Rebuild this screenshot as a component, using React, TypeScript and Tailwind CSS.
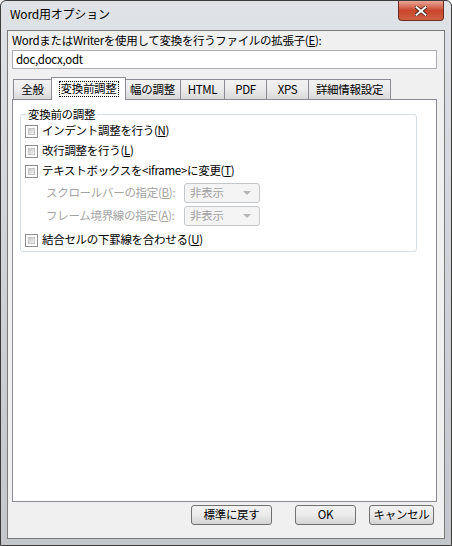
import { ReactNode } from "react"

const font = { fontFamily: '"Noto Sans CJK JP", "Liberation Sans", sans-serif' }

type CheckProps = { label: ReactNode }

function Check(props: CheckProps) {
  return (
    <div className="flex items-center h-[20px]">
      <div className="w-[13px] h-[13px] border border-[#8e8f8f] bg-white p-[2px]">
        <div className="w-full h-full border border-[#c4c4c4] bg-gradient-to-br from-[#cbcbcb] to-[#f4f4f4]" />
      </div>
      <span className="ml-[4px] text-[11.5px] tracking-[-0.3px] text-black leading-none whitespace-nowrap">{props.label}</span>
    </div>
  )
}

function DisabledSelect() {
  return (
    <div className="w-[76px] h-[20px] border border-[#c5c8cb] rounded-[3px] bg-[#f4f4f4] flex items-center justify-between pl-[5px] pr-[8px]">
      <span className="text-[11.5px] text-[#a3a3a3] leading-none">非表示</span>
      <div className="w-0 h-0 border-l-[4px] border-r-[4px] border-t-[4px] border-l-transparent border-r-transparent border-t-[#b5b5b5]" />
    </div>
  )
}

function WinButton(props: { label: string, width: string }) {
  return (
    <button className={"h-[20px] border border-[#707070] rounded-[3px] bg-gradient-to-b from-[#f2f2f2] via-[#ebebeb] to-[#d3d3d3] text-[11.5px] text-black leading-none " + props.width}>
      {props.label}
    </button>
  )
}

const tabs = ["全般", "変換前調整", "幅の調整", "HTML", "PDF", "XPS", "詳細情報設定"]
const tabWidths = ["w-[39px]", "w-[75px]", "w-[57px]", "w-[45px]", "w-[43px]", "w-[43px]", "w-[83px]"]

export default function App() {
  return (
    <div style={font} className="w-[452px] h-[546px] bg-white">
      <div className="w-[452px] h-[546px] flex flex-col border border-[#3c3c3c] rounded-t-[6px] bg-gradient-to-b from-[#dfe2e6] via-[#cfd2d6] to-[#c3c6ca] px-[6px] pb-[6px]">
        {/* title bar */}
        <div className="h-[29px] flex justify-between items-start shrink-0">
          <span className="pl-[3px] pt-[7px] text-[12px] tracking-[-0.2px] text-black leading-none">Word用オプション</span>
          <div className="mr-[1px] w-[46px] h-[20px] rounded-b-[4px] border border-t-0 border-[#6d2c22] bg-gradient-to-b from-[#e8a596] via-[#c9452c] to-[#d0603f] flex items-center justify-center">
            <svg width="12" height="10" viewBox="0 0 12 10">
              <path d="M1 1 L11 9 M11 1 L1 9" stroke="#3a1a14" strokeWidth="3.4" strokeLinecap="square" />
              <path d="M1.5 1.2 L10.5 8.8 M10.5 1.2 L1.5 8.8" stroke="#ffffff" strokeWidth="2" strokeLinecap="square" />
            </svg>
          </div>
        </div>
        {/* client area */}
        <div className="flex-1 flex flex-col bg-[#f0f0f0] border border-[#7a7a7a] px-[4px] pt-[4px] text-[11.5px] tracking-[-0.3px]">
          <div className="leading-none h-[15px] whitespace-nowrap">WordまたはWriterを使用して変換を行うファイルの拡張子(<u>E</u>):</div>
          <div className="h-[19px] border border-[#abadb3] bg-white flex items-center pl-[3px] leading-none mr-[3px]">doc,docx,odt</div>
          {/* tabs */}
          <div className="flex items-end h-[30px] pl-[1px]">
            {tabs.map((t, i) =>
              i === 1 ?
                <div key={t} className={"relative z-10 -mb-[1px] h-[23px] bg-white border border-b-0 border-[#898c95] flex items-center justify-center -mx-[1px] " + tabWidths[i]}>
                  <span className="border border-dotted border-black px-[1px] leading-none py-[1px]">{t}</span>
                </div>
                :
                <div key={t} className={"h-[20px] border border-b-0 border-[#898c95] -ml-[1px] first:ml-0 bg-gradient-to-b from-[#f2f2f2] via-[#ebebeb] to-[#d9d9d9] flex items-center justify-center leading-none " + tabWidths[i]}>
                  {t}
                </div>
            )}
          </div>
          {/* tab panel */}
          <div className="h-[403px] border border-[#898c95] bg-white mr-[3px] px-[7px] pt-[14px]">
            <div className="relative w-[397px] border border-[#d5dfe5] rounded-[3px] pt-[6px] pl-[4px] pb-[1px]">
              <span className="absolute -top-[6px] left-[5px] bg-white px-[2px] leading-none">変換前の調整</span>
              <Check label={<>インデント調整を行う(<u>N</u>)</>} />
              <Check label={<>改行調整を行う(<u>L</u>)</>} />
              <Check label={<>テキストボックスを&lt;iframe&gt;に変更(<u>T</u>)</>} />
              <div className="flex items-center h-[21px] pl-[21px] mt-[1px]">
                <span className="w-[138px] text-[#a3a3a3] leading-none whitespace-nowrap">スクロールバーの指定(<u>B</u>):</span>
                <DisabledSelect />
              </div>
              <div className="flex items-center h-[21px] pl-[21px] mt-[2px]">
                <span className="w-[138px] text-[#a3a3a3] leading-none whitespace-nowrap">フレーム境界線の指定(<u>A</u>):</span>
                <DisabledSelect />
              </div>
              <div className="mt-[4px]">
                <Check label={<>結合セルの下罫線を合わせる(<u>U</u>)</>} />
              </div>
            </div>
          </div>
          {/* buttons */}
          <div className="flex justify-end items-center h-[25px] mr-[6px]">
            <WinButton label="標準に戻す" width="w-[81px] mr-[23px]" />
            <WinButton label="OK" width="w-[61px] mr-[13px]" />
            <WinButton label="キャンセル" width="w-[65px]" />
          </div>
        </div>
      </div>
    </div>
  )
}
